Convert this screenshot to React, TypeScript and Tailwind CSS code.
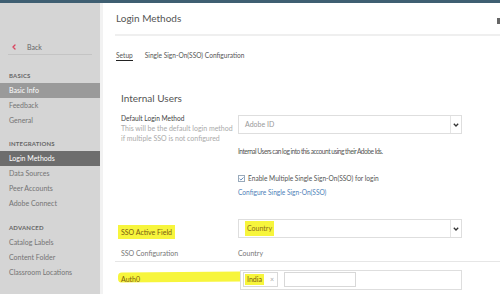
import { ChevronLeft, Check } from "lucide-react";

const basics = ["Basic Info", "Feedback", "General"];
const integrations = ["Login Methods", "Data Sources", "Peer Accounts", "Adobe Connect"];
const advanced = ["Catalog Labels", "Content Folder", "Classroom Locations"];

function NavItem({ label, active }: { label: string; active?: string }) {
  return (
    <div
      className={`flex h-[15px] items-center pl-[9px] text-[7px] ${
        active === "light"
          ? "bg-[#9a9a9a] text-white"
          : active === "dark"
            ? "bg-[#6d6d6d] text-white"
            : "text-[#747474]"
      }`}
    >
      {label}
    </div>
  );
}

function SectionTitle({ label }: { label: string }) {
  return (
    <div className="flex h-[15px] items-center pl-[9px] text-[6px] font-bold tracking-[0.2px] text-[#666]">
      {label}
    </div>
  );
}

function Select({ value, highlight }: { value: string; highlight?: boolean }) {
  return (
    <div className="flex h-[19px] w-[224px] items-center border border-[#dedede] bg-white">
      <div className="flex flex-1 items-center pl-[6px]">
        <span
          className={`text-[7px] ${highlight ? "bg-[#f7f53c] px-[2px] py-[2px] text-[#8a6d1a]" : "text-[#999]"}`}
        >
          {value}
        </span>
      </div>
      <div className="flex h-full w-[11px] items-center justify-center border-l border-[#e4e4e4]">
        <svg width="6" height="4" viewBox="0 0 6 4">
          <path d="M0.8 0.8 L3 3 L5.2 0.8" fill="none" stroke="#333" strokeWidth="1.3" />
        </svg>
      </div>
    </div>
  );
}

export default function App() {
  return (
    <div
      className="flex h-[294px] w-[500px] flex-col overflow-hidden bg-white"
      style={{ fontFamily: "Lato, 'Open Sans', sans-serif" }}
    >
      <div className="h-[3px] bg-[#3f5f72]" />
      <div className="flex flex-1">
        {/* sidebar */}
        <div className="w-[100px] bg-[#d5d5d5] pt-[37px]">
          <div className="mx-[8px] flex h-[15px] items-center gap-[9px] border-b border-[#c4c4c4] pl-[2px] text-[7px] text-[#666]">
            <ChevronLeft className="h-[8px] w-[8px] text-[#d9455f]" strokeWidth={4} />
            Back
          </div>
          <div className="mt-[13px]">
            <SectionTitle label="BASICS" />
            {basics.map((b, i) => (
              <NavItem key={b} label={b} active={i === 0 ? "light" : undefined} />
            ))}
          </div>
          <div className="mt-[8px]">
            <SectionTitle label="INTEGRATIONS" />
            {integrations.map((b, i) => (
              <NavItem key={b} label={b} active={i === 0 ? "dark" : undefined} />
            ))}
          </div>
          <div className="mt-[9px]">
            <SectionTitle label="ADVANCED" />
            {advanced.map((b) => (
              <NavItem key={b} label={b} />
            ))}
          </div>
        </div>
        <div className="w-[3px] bg-[#f2f2f2]" />

        {/* main */}
        <div className="relative flex-1">
          <div className="ml-[12px] flex h-[33px] items-center border-b-2 border-[#efefef] pl-[1px] text-[10px] text-[#555]">
            Login Methods
          </div>
          <div className="ml-[13px] mt-[14px] flex h-[12px] items-center gap-[12px] text-[6.6px] text-[#555]">
            <span className="border-b border-[#222] leading-[9px]">Setup</span>
            <span>Single Sign-On(SSO) Configuration</span>
          </div>

          <div className="ml-[18px] mt-[30px] text-[10px] leading-[12px] text-[#555]">
            Internal Users
          </div>

          <div className="ml-[18px] mt-[11px] flex">
            <div className="w-[117px] leading-[10px]">
              <div className="-mt-[2px] text-[6.6px] text-[#444]">Default Login Method</div>
              <div className="text-[7px] text-[#aaa]">This will be the default login method</div>
              <div className="text-[7px] text-[#aaa]">if multiple SSO is not configured</div>
            </div>
            <div>
              <Select value="Adobe ID" />
              <div className="mt-[13px] text-[6.6px] tracking-[-0.5px] text-[#555]">
                Internal Users can log into this account using their Adobe Ids.
              </div>
              <div className="mt-[17px] flex items-center gap-[3px] text-[6.6px] text-[#555]">
                <span className="flex h-[7px] w-[7px] items-center justify-center border border-[#9ab] bg-white">
                  <Check className="h-[6px] w-[6px] text-[#3d6fa8]" strokeWidth={4} />
                </span>
                Enable Multiple Single Sign-On(SSO) for login
              </div>
              <div className="mt-[4px] text-[6.6px] text-[#4f7fb8]">Configure Single Sign-On(SSO)</div>
            </div>
          </div>

          <div className="ml-[18px] mt-[19px] flex items-center">
            <div className="w-[117px]">
              <span className="-ml-[3px] bg-[#f7f53c] px-[3px] py-[3px] text-[7px] text-[#7a5a10]">
                SSO Active Field
              </span>
            </div>
            <Select value="Country" highlight />
          </div>

          <div className="ml-[12px] mt-[6px] flex h-[15px] items-center border-b border-[#e6e6e6] pl-[6px] text-[7px] text-[#777]">
            <div className="w-[117px]">SSO Configuration</div>
            <div>Country</div>
          </div>

          <div className="relative ml-[18px] mt-[8px] flex items-center">
            <div className="absolute left-[-3px] top-[2px] h-[10px] w-[127px] -rotate-[0.6deg] rounded-[4px] bg-[#f7f53c]" />
            <div className="relative w-[119px] text-[7px] text-[#7a5a10]">Auth0</div>
            <div className="relative flex h-[20px] w-[222px] items-center gap-[6px] border border-[#dedede] bg-white pl-[2px]">
              <span className="flex h-[15px] w-[35px] items-center gap-[6px] border border-[#d8d8d8] pl-[1px] text-[7px]">
                <span className="bg-[#f7f53c] px-[2px] text-[#7a5a10]">India</span>
                <span className="text-[#aaa]">×</span>
              </span>
              <span className="h-[15px] w-[72px] border border-[#d8d8d8]" />
            </div>
          </div>

          <div className="absolute right-0 top-[15px] h-[6px] w-[3px] bg-[#666]" />
        </div>
      </div>
    </div>
  );
}
